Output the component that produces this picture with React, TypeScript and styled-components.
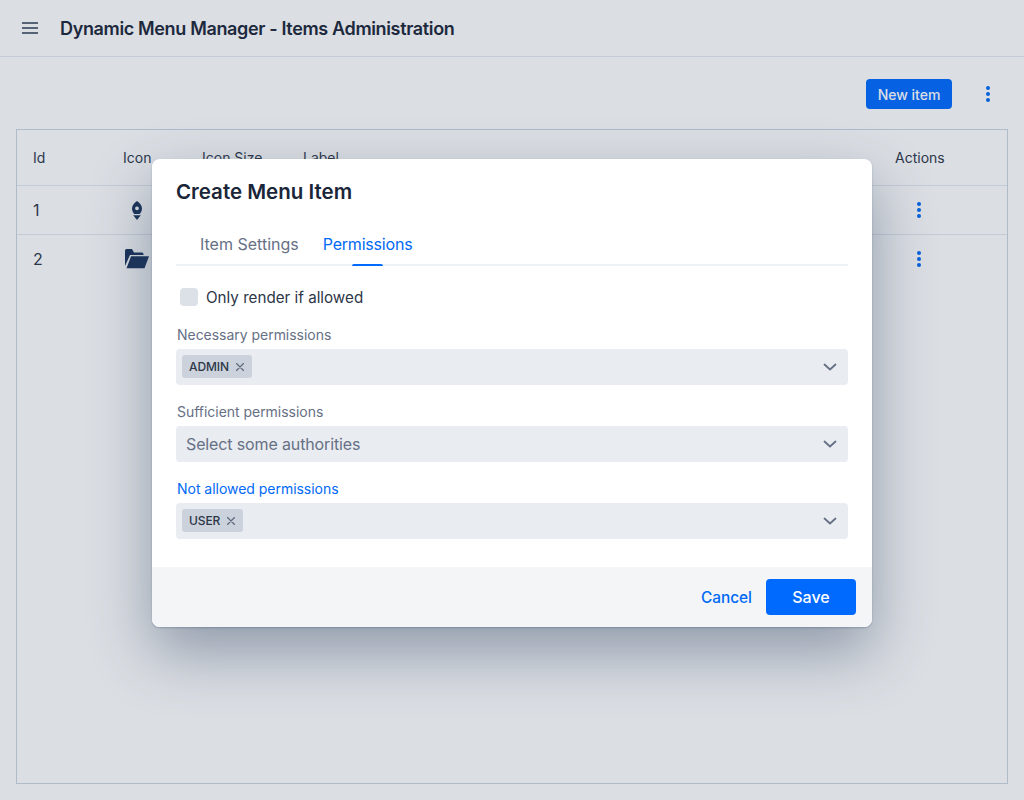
import React from 'react';
import styled, { createGlobalStyle } from 'styled-components';

const GlobalStyle = createGlobalStyle`
  html, body {
    margin: 0;
    padding: 0;
    background: #fff;
  }
  body {
    font-family: Inter, "Liberation Sans", sans-serif;
    color: #1a202c;
  }
  * {
    box-sizing: border-box;
  }
`;

const Page = styled.div`
  position: relative;
  width: 1024px;
  height: 800px;
  overflow: hidden;
`;

const Header = styled.header`
  display: flex;
  align-items: center;
  gap: 22px;
  height: 57px;
  padding-left: 22px;
  border-bottom: 1px solid #e2e8f0;
`;

const MenuIcon = styled.svg`
  width: 16px;
  height: 12px;
  color: #5f6b7c;
`;

const Title = styled.h1`
  margin: 2px 0 0;
  font-size: 18px;
  font-weight: 600;
  line-height: 24px;
  letter-spacing: -0.35px;
  color: #1a2638;
`;

const Toolbar = styled.div`
  display: flex;
  align-items: center;
  justify-content: flex-end;
  gap: 26px;
  height: 72px;
  padding: 2px 26px 0 0;
`;

const PrimaryButton = styled.button`
  width: 86px;
  height: 30px;
  padding: 0;
  border: 0;
  border-radius: 4px;
  background: #006aff;
  color: #fff;
  font: 500 14px Inter, sans-serif;
`;

const Kebab = styled.svg`
  display: block;
  width: 20px;
  height: 20px;
  color: #0069f5;
`;

const Table = styled.div`
  height: 655px;
  margin: 0 16px;
  border: 1px solid #cbd5e0;
`;

const Row = styled.div<{ $head?: boolean; $last?: boolean }>`
  display: grid;
  grid-template-columns: 90px 79px 101px 1fr 128px;
  align-items: center;
  height: ${(p) => (p.$head ? '56px' : p.$last ? '48px' : '49px')};
  border-bottom: ${(p) => (p.$last ? '0' : '1px solid #e2e8f0')};
  font-size: ${(p) => (p.$head ? '14px' : '16px')};
  color: #2d3748;
`;

const Cell = styled.div`
  display: flex;
  padding-left: 16px;
  line-height: 20px;
  white-space: nowrap;
`;

const IconBox = styled.div`
  display: flex;
  justify-content: center;
  width: 28px;
  color: #17315a;
`;

const ActionBox = styled.div`
  display: flex;
  justify-content: center;
  width: 48px;
`;

const Overlay = styled.div`
  position: absolute;
  inset: 0;
  display: flex;
  justify-content: center;
  padding-top: 159px;
  background: rgba(43, 61, 90, 0.17);
`;

const Modal = styled.div`
  display: flex;
  flex-direction: column;
  width: 720px;
  height: 468px;
  border-radius: 8px;
  overflow: hidden;
  background: #fff;
`;

const ModalShadow = styled.div`
  align-self: flex-start;
  border-radius: 8px;
  box-shadow: 0 25px 60px rgba(50, 70, 100, 0.45), 0 1px 2px rgba(50, 70, 100, 0.3);
`;

const ModalTitle = styled.h2`
  margin: 0;
  padding: 21px 24px 0;
  font-size: 20.5px;
  font-weight: 600;
  line-height: 24px;
  color: #1a2638;
`;

const ModalBody = styled.div`
  flex: 1;
  padding: 0 24px;
`;

const Tabs = styled.div`
  display: flex;
  height: 40px;
  margin-top: 22px;
  padding-left: 12px;
  border-bottom: 2px solid #edf2f7;
`;

const Tab = styled.div<{ $active?: boolean }>`
  position: relative;
  padding: 0 12px;
  font-size: 16px;
  line-height: 36px;
  letter-spacing: ${(p) => (p.$active ? '-0.2px' : '0')};
  color: ${(p) => (p.$active ? '#0069f5' : '#667085')};

  ${(p) =>
    p.$active &&
    `&:after {
      position: absolute;
      left: 50%;
      bottom: -2px;
      width: 31px;
      height: 2px;
      margin-left: -16px;
      border-radius: 2px 2px 0 0;
      background: #006aff;
      content: '';
    }`}
`;

const CheckRow = styled.label`
  display: flex;
  align-items: center;
  gap: 8px;
  height: 18px;
  margin: 22px 0 0 4px;
  font-size: 15.2px;
  color: #2d3748;
`;

const CheckBox = styled.span`
  width: 18px;
  height: 18px;
  border-radius: 4px;
  background: #dce1e8;
`;

const Field = styled.div`
  margin-top: 19px;

  & + & {
    margin-top: 17px;
  }
`;

const FieldLabel = styled.div<{ $focus?: boolean }>`
  height: 24px;
  padding-left: 1px;
  font-size: 14px;
  line-height: 20px;
  letter-spacing: -0.03px;
  color: ${(p) => (p.$focus ? '#0069f5' : '#667085')};
`;

const Select = styled.div`
  display: flex;
  align-items: center;
  justify-content: space-between;
  height: 36px;
  padding: 0 10px 0 6px;
  border-radius: 4px;
  background: #e9ecf1;
`;

const Placeholder = styled.span`
  padding-left: 4px;
  font-size: 16px;
  letter-spacing: -0.13px;
  color: #667085;
`;

const Tag = styled.span`
  display: flex;
  align-items: center;
  gap: 7px;
  height: 23px;
  margin-top: -1px;
  padding: 0 8px 0 7px;
  border-radius: 3px;
  background: #cbd2dc;
  font-size: 12px;
  font-weight: 500;
  letter-spacing: -0.1px;
  color: #2d3748;
`;

const Chevron = styled.svg`
  width: 16px;
  height: 16px;
  color: #667085;
`;

const Footer = styled.div`
  display: flex;
  align-items: center;
  justify-content: flex-end;
  gap: 14px;
  height: 60px;
  padding: 0 16px;
  background: #f3f5f7;
`;

const CancelButton = styled.button`
  padding: 0;
  border: 0;
  background: none;
  color: #0069f5;
  font: 500 15.4px Inter, sans-serif;
`;

const SaveButton = styled.button`
  width: 90px;
  height: 36px;
  border: 0;
  border-radius: 4px;
  background: #006aff;
  color: #fff;
  font: 500 16px Inter, sans-serif;
`;

const Dots = () => (
  <Kebab viewBox="0 0 20 20" fill="currentColor">
    <circle cx="10" cy="4" r="2" />
    <circle cx="10" cy="10" r="2" />
    <circle cx="10" cy="16" r="2" />
  </Kebab>
);

const Rocket = () => (
  <svg width="10" height="19" viewBox="0 0 10 19" fill="currentColor">
    <path
      fillRule="evenodd"
      d="M5 0C7.6 2 10 4.4 10 7.6C10 9.8 9 11.6 7.8 13H2.2C1 11.6 0 9.8 0 7.6C0 4.4 2.4 2 5 0ZM5 5.4A1.9 1.9 0 1 0 5 9.2A1.9 1.9 0 1 0 5 5.4Z"
    />
    <path d="M1.2 14.2H8.8L5 19Z" />
  </svg>
);

const Folder = () => (
  <svg width="24" height="20" viewBox="0 0 24 20" fill="currentColor">
    <path d="M0 1.5Q0 0 1.5 0H7L9 3.5H17Q18.5 3.5 18.5 5V6H5L0 17Z" />
    <path d="M6 7.2H24L19.5 19.2H1.5Z" />
  </svg>
);

const Close = () => (
  <svg width="8" height="8" viewBox="0 0 8 8" stroke="#5f6b7c" strokeWidth="1.3" strokeLinecap="round">
    <path d="M0.5 0.5L7.5 7.5M7.5 0.5L0.5 7.5" />
  </svg>
);

const Caret = () => (
  <Chevron viewBox="0 0 16 16" fill="none" stroke="currentColor" strokeWidth="1.8" strokeLinecap="round" strokeLinejoin="round">
    <path d="M2.5 5.5L8 10.5L13.5 5.5" />
  </Chevron>
);

const App = () => (
  <Page>
    <GlobalStyle />
    <Header>
      <MenuIcon viewBox="0 0 16 12" stroke="currentColor" strokeWidth="2">
        <path d="M0 1H16M0 6H16M0 11H16" />
      </MenuIcon>
      <Title>Dynamic Menu Manager - Items Administration</Title>
    </Header>
    <Toolbar>
      <PrimaryButton>New item</PrimaryButton>
      <Dots />
    </Toolbar>
    <Table>
      <Row $head>
        <Cell>Id</Cell>
        <Cell>Icon</Cell>
        <Cell>Icon Size</Cell>
        <Cell>Label</Cell>
        <Cell>Actions</Cell>
      </Row>
      <Row>
        <Cell>1</Cell>
        <Cell>
          <IconBox>
            <Rocket />
          </IconBox>
        </Cell>
        <Cell />
        <Cell />
        <Cell>
          <ActionBox>
            <Dots />
          </ActionBox>
        </Cell>
      </Row>
      <Row $last>
        <Cell>2</Cell>
        <Cell>
          <IconBox>
            <Folder />
          </IconBox>
        </Cell>
        <Cell />
        <Cell />
        <Cell>
          <ActionBox>
            <Dots />
          </ActionBox>
        </Cell>
      </Row>
    </Table>
    <Overlay>
      <ModalShadow>
        <Modal>
          <ModalTitle>Create Menu Item</ModalTitle>
          <ModalBody>
            <Tabs>
              <Tab>Item Settings</Tab>
              <Tab $active>Permissions</Tab>
            </Tabs>
            <CheckRow>
              <CheckBox />
              Only render if allowed
            </CheckRow>
            <Field>
              <FieldLabel>Necessary permissions</FieldLabel>
              <Select>
                <Tag>
                  ADMIN
                  <Close />
                </Tag>
                <Caret />
              </Select>
            </Field>
            <Field>
              <FieldLabel>Sufficient permissions</FieldLabel>
              <Select>
                <Placeholder>Select some authorities</Placeholder>
                <Caret />
              </Select>
            </Field>
            <Field>
              <FieldLabel $focus>Not allowed permissions</FieldLabel>
              <Select>
                <Tag>
                  USER
                  <Close />
                </Tag>
                <Caret />
              </Select>
            </Field>
          </ModalBody>
          <Footer>
            <CancelButton>Cancel</CancelButton>
            <SaveButton>Save</SaveButton>
          </Footer>
        </Modal>
      </ModalShadow>
    </Overlay>
  </Page>
);

export default App;
